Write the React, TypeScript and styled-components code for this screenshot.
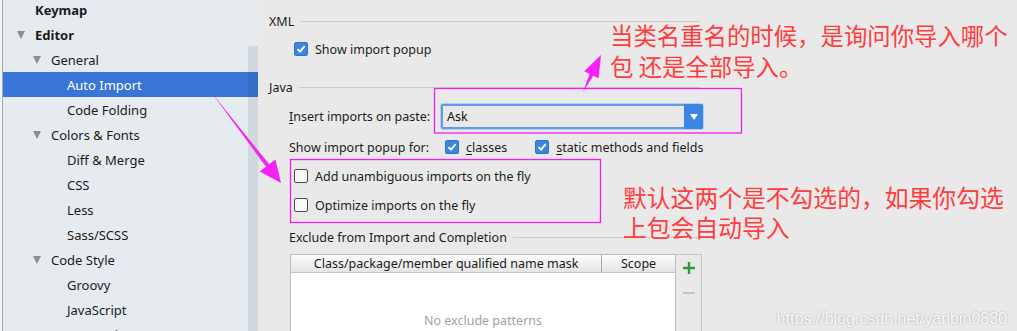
import React from 'react';
import styled, { createGlobalStyle } from 'styled-components';

const GlobalStyle = createGlobalStyle`
  html, body {
    margin: 0;
    padding: 0;
    overflow: hidden;
    background: #e9e9e9;
  }
`;

type TreeItem = {
  label: string;
  level: number;
  bold?: boolean;
  open?: boolean;
  selected?: boolean;
};

const TREE: TreeItem[] = [
  { label: 'Keymap', level: 0, bold: true },
  { label: 'Editor', level: 0, bold: true, open: true },
  { label: 'General', level: 1, open: true },
  { label: 'Auto Import', level: 2, selected: true },
  { label: 'Code Folding', level: 2 },
  { label: 'Colors & Fonts', level: 1, open: true },
  { label: 'Diff & Merge', level: 2 },
  { label: 'CSS', level: 2 },
  { label: 'Less', level: 2 },
  { label: 'Sass/SCSS', level: 2 },
  { label: 'Code Style', level: 1, open: true },
  { label: 'Groovy', level: 2 },
  { label: 'JavaScript', level: 2 },
  { label: 'TypeScript', level: 2 },
];

const Check = ({ checked }: { checked?: boolean }) => (
  <CheckBox $checked={checked}>
    {checked && (
      <svg width="10" height="10" viewBox="0 0 10 10">
        <path d="M1.5 5.2 L4 7.6 L8.6 2.2" fill="none" stroke="#fff" strokeWidth="1.8" />
      </svg>
    )}
  </CheckBox>
);

export default function App() {
  return (
    <Page>
      <GlobalStyle />
      <EdgeStrip>
        <Sidebar>
          <TreeList>
            {TREE.map((item) => (
              <TreeRow key={item.label} $level={item.level} $selected={item.selected}>
                <Toggle>{item.open && <Triangle />}</Toggle>
                <TreeLabel $bold={item.bold}>{item.label}</TreeLabel>
              </TreeRow>
            ))}
          </TreeList>
          <ScrollThumb />
        </Sidebar>
      </EdgeStrip>

      <Pane>
        <SectionHeader $indent={0} $top={13}>
          <HeaderLabel>XML</HeaderLabel>
          <HeaderLine />
        </SectionHeader>
        <OptionRow $indent={25} $top={10}>
          <Check checked />
          <OptionText>Show import popup</OptionText>
        </OptionRow>

        <SectionHeader $indent={0} $top={20}>
          <HeaderLabel>Java</HeaderLabel>
          <HeaderLine />
        </SectionHeader>
        <FormGrid>
          <FieldLabel>
            <u>I</u>nsert imports on paste:
          </FieldLabel>
          <Combo>
            <ComboValue>Ask</ComboValue>
            <ComboButton>
              <ComboArrow />
            </ComboButton>
          </Combo>
          <FieldLabel>Show import popup for:</FieldLabel>
          <InlineChecks>
            <InlineCheck>
              <Check checked />
              <OptionText>
                <u>c</u>lasses
              </OptionText>
            </InlineCheck>
            <InlineCheck>
              <Check checked />
              <OptionText>
                <u>s</u>tatic methods and fields
              </OptionText>
            </InlineCheck>
          </InlineChecks>
        </FormGrid>
        <OptionRow $indent={25} $top={9}>
          <Check />
          <OptionText>Add unambiguous imports on the fly</OptionText>
        </OptionRow>
        <OptionRow $indent={25} $top={9}>
          <Check />
          <OptionText>Optimize imports on the fly</OptionText>
        </OptionRow>

        <SectionHeader $indent={20} $top={14}>
          <HeaderLabel>Exclude from Import and Completion</HeaderLabel>
          <HeaderLine />
        </SectionHeader>
        <TableArea>
          <Table>
            <TableHead>
              <HeadCell $width={311}>Class/package/member qualified name mask</HeadCell>
              <HeadCell $width={75} $last>
                Scope
              </HeadCell>
            </TableHead>
            <TableBody>No exclude patterns</TableBody>
          </Table>
          <TableTools>
            <ToolIcon>
              <svg width="14" height="14" viewBox="0 0 14 14">
                <path d="M7 1 V13 M1 7 H13" stroke="#2e9c3c" strokeWidth="2.4" />
              </svg>
            </ToolIcon>
            <ToolIcon>
              <svg width="14" height="14" viewBox="0 0 14 14">
                <path d="M1 7 H13" stroke="#c4c4c4" strokeWidth="2" />
              </svg>
            </ToolIcon>
          </TableTools>
        </TableArea>
      </Pane>

      <Marks width="1017" height="331" viewBox="0 0 1017 331">
        <rect x="434.5" y="88.5" width="307" height="44.5" fill="none" stroke="#f01ef0" strokeWidth="1.3" />
        <rect x="290.5" y="159.5" width="310" height="63" fill="none" stroke="#f01ef0" strokeWidth="1.3" />
        <polygon
          points="211,92 266.0,166.7 259.7,171.6 281,183 275.5,159.4 269.2,164.3"
          fill="#f522f5"
        />
        <polygon
          points="583,92 589.6,73.9 584.2,71.3 601,55 598.6,78.3 593.2,75.7"
          fill="#f522f5"
        />
      </Marks>

      <Note $left={610} $top={20} $size={23.4} $lead={31}>
        当类名重名的时候，是询问你导入哪个
        <br />包 还是全部导入。
      </Note>
      <Note $left={623} $top={182} $size={23.8} $lead={30}>
        默认这两个是不勾选的，如果你勾选
        <br />
        上包会自动导入
      </Note>
      <Watermark>https://blog.csdn.net/yanbin0830</Watermark>
    </Page>
  );
}

const Page = styled.div`
  position: relative;
  display: flex;
  width: 1017px;
  height: 331px;
  overflow: hidden;
  background: #e9e9e9;
  font-family: 'Noto Sans', 'Open Sans', sans-serif;
  color: #1c1c1c;
`;

const EdgeStrip = styled.div`
  display: flex;
  padding-left: 2px;
  background: #f1f3f5;
`;

const Sidebar = styled.div`
  position: relative;
  width: 255px;
  border-left: 1px solid #a3acb6;
  background: #e6ebf0;
  overflow: hidden;
`;

const TreeList = styled.div`
  margin-top: -3px;
  display: flex;
  flex-direction: column;
`;

const TreeRow = styled.div<{ $level: number; $selected?: boolean }>`
  flex: none;
  height: 25px;
  display: flex;
  align-items: center;
  padding-left: ${(p) => 14 + p.$level * 16}px;
  background: ${(p) => (p.$selected ? '#3875d7' : 'transparent')};
  color: ${(p) => (p.$selected ? '#ffffff' : '#1c1c1c')};
`;

const Toggle = styled.span`
  width: 18px;
  display: flex;
  align-items: center;
`;

const Triangle = styled.span`
  width: 0;
  height: 0;
  border-left: 4.5px solid transparent;
  border-right: 4.5px solid transparent;
  border-top: 8px solid #8e8e8e;
`;

const TreeLabel = styled.span<{ $bold?: boolean }>`
  font-size: 13px;
  font-weight: ${(p) => (p.$bold ? 700 : 400)};
  white-space: nowrap;
`;

const ScrollThumb = styled.div`
  position: absolute;
  right: 0;
  top: 46px;
  bottom: 0;
  width: 10px;
  background: rgba(40, 55, 75, 0.11);
`;

const Pane = styled.div`
  width: 445px;
  padding-left: 11px;
  display: flex;
  flex-direction: column;
  font-size: 12.5px;
  & > * {
    flex-shrink: 0;
  }
`;

const SectionHeader = styled.div<{ $indent: number; $top: number }>`
  height: 16px;
  margin-top: ${(p) => p.$top}px;
  margin-left: ${(p) => p.$indent}px;
  display: flex;
  align-items: center;
  gap: 6px;
  width: ${(p) => 431 - p.$indent}px;
`;

const HeaderLabel = styled.span`
  white-space: nowrap;
  font-size: 12.5px;
`;

const HeaderLine = styled.div`
  flex: 1;
  border-top: 1px solid #cbcbcb;
`;

const OptionRow = styled.div<{ $indent: number; $top: number }>`
  height: 20px;
  margin-top: ${(p) => p.$top}px;
  margin-left: ${(p) => p.$indent}px;
  display: flex;
  align-items: center;
  gap: 7px;
`;

const CheckBox = styled.span<{ $checked?: boolean }>`
  box-sizing: border-box;
  width: 14px;
  height: 14px;
  border-radius: 2px;
  display: flex;
  align-items: center;
  justify-content: center;
  flex: none;
  background: ${(p) => (p.$checked ? '#3d84dd' : '#fbfbfb')};
  border: 1px solid ${(p) => (p.$checked ? '#2f72c8' : '#4a4a4a')};
`;

const OptionText = styled.span`
  white-space: nowrap;
  font-size: 12.5px;
  u {
    text-underline-offset: 2px;
  }
`;

const FormGrid = styled.div`
  margin-top: 9px;
  margin-left: 20px;
  display: grid;
  grid-template-columns: 152px auto;
  grid-template-rows: 25px 20px;
  row-gap: 8px;
  align-items: center;
  u {
    text-underline-offset: 2px;
  }
`;

const FieldLabel = styled.span`
  white-space: nowrap;
  font-size: 12.5px;
`;

const Combo = styled.div`
  box-sizing: border-box;
  width: 262px;
  height: 25px;
  display: flex;
  border: 2px solid #5e9ee6;
  border-radius: 2px;
  background: #e8e8e8;
  box-shadow: 0 0 0 1px rgba(94, 158, 230, 0.35);
`;

const ComboValue = styled.span`
  flex: 1;
  display: flex;
  align-items: center;
  padding-left: 4px;
  font-size: 12.5px;
  color: #111;
`;

const ComboButton = styled.span`
  width: 19px;
  margin: -2px -2px -2px 0;
  background: #3a86e2;
  border-radius: 0 2px 2px 0;
  display: flex;
  align-items: center;
  justify-content: center;
`;

const ComboArrow = styled.span`
  width: 0;
  height: 0;
  border-left: 4.5px solid transparent;
  border-right: 4.5px solid transparent;
  border-top: 6px solid #ffffff;
`;

const InlineChecks = styled.div`
  display: flex;
  align-items: center;
  gap: 28px;
  padding-left: 4px;
`;

const InlineCheck = styled.div`
  display: flex;
  align-items: center;
  gap: 7px;
`;

const TableArea = styled.div`
  margin-top: 9px;
  margin-left: 21px;
  display: flex;
`;

const Table = styled.div`
  width: 386px;
  border: 1px solid #bcbcbc;
  box-sizing: border-box;
  display: flex;
  flex-direction: column;
`;

const TableHead = styled.div`
  display: flex;
  height: 17px;
  background: linear-gradient(#fdfdfd, #e4e4e4);
  border-bottom: 1px solid #c6c6c6;
`;

const HeadCell = styled.div<{ $width: number; $last?: boolean }>`
  width: ${(p) => p.$width - (p.$last ? 2 : 0)}px;
  display: flex;
  align-items: center;
  justify-content: center;
  font-size: 12.5px;
  color: #1a1a1a;
  border-right: ${(p) => (p.$last ? 'none' : '1px solid #a8a8a8')};
  white-space: nowrap;
`;

const TableBody = styled.div`
  height: 94px;
  background: #ffffff;
  display: flex;
  align-items: center;
  justify-content: center;
  font-size: 12.5px;
  color: #a2a2a2;
`;

const TableTools = styled.div`
  width: 26px;
  height: 112px;
  box-sizing: border-box;
  border: 1px solid #c8c8c8;
  border-left: none;
  display: flex;
  flex-direction: column;
  align-items: center;
  padding-top: 6px;
  gap: 11px;
`;

const ToolIcon = styled.span`
  display: flex;
  width: 14px;
  height: 14px;
`;

const Marks = styled.svg`
  position: absolute;
  left: 0;
  top: 0;
  pointer-events: none;
`;

const Note = styled.div<{ $left: number; $top: number; $size: number; $lead: number }>`
  position: absolute;
  left: ${(p) => p.$left}px;
  top: ${(p) => p.$top}px;
  font-family: 'Noto Sans CJK SC', sans-serif;
  font-size: ${(p) => p.$size}px;
  line-height: ${(p) => p.$lead}px;
  color: #ff3d3d;
  white-space: nowrap;
`;

const Watermark = styled.div`
  position: absolute;
  right: 10px;
  bottom: 3px;
  font-family: 'Liberation Sans', Arial, sans-serif;
  font-size: 16px;
  color: rgba(255, 255, 255, 0.92);
  text-shadow: 0 0 2px rgba(0, 0, 0, 0.3);
`;
